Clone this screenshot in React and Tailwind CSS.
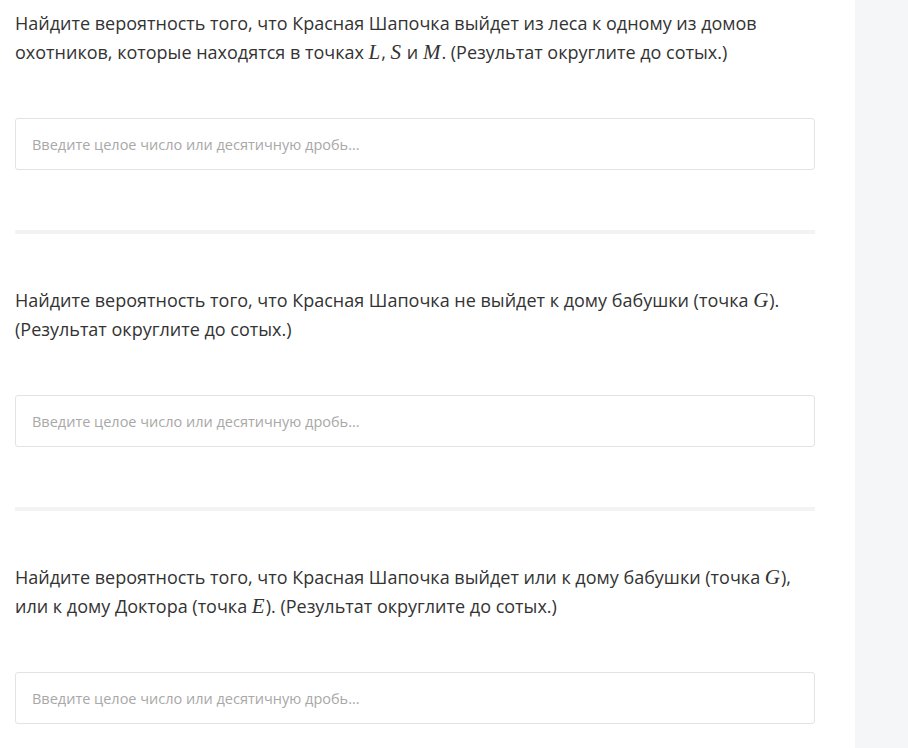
const PLACEHOLDER = "Введите целое число или десятичную дробь...";

function M({ children }) {
  return (
    <span className="inline-block pr-px font-['Liberation_Serif',serif] italic text-[21px] leading-[20px]">
      {children}
    </span>
  );
}

function AnswerInput() {
  return (
    <input
      type="text"
      placeholder={PLACEHOLDER}
      className="block h-[52px] w-full rounded-[3px] border border-[#e3e3e3] bg-white px-4 text-[14.5px] text-[#333] placeholder:text-[#a8a8a8] outline-none"
    />
  );
}

function Task({ children, last }) {
  return (
    <section className={last ? "" : "border-b-4 border-[#f3f3f3] pb-[60px] mb-[52px]"}>
      <p className="text-[18px] leading-[28.5px] text-[#333]">{children}</p>
      <div className="mt-[52px]">
        <AnswerInput />
      </div>
    </section>
  );
}

export default function App() {
  return (
    <div className="flex min-h-[748px] w-full bg-[#f5f6f8] font-['Open_Sans','Noto_Sans',sans-serif]">
      <main className="w-[855px] shrink-0 bg-white pl-[15px] pr-10 pt-[9px]">
        <Task>
          Найдите вероятность того, что Красная Шапочка выйдет из леса к одному из домов охотников, которые
          находятся в точках <M>L</M>, <M>S</M> и <M>M</M>. (Результат округлите до сотых.)
        </Task>
        <Task>
          Найдите вероятность того, что Красная Шапочка не выйдет к дому бабушки (точка <M>G</M>).
          (Результат округлите до сотых.)
        </Task>
        <Task last>
          Найдите вероятность того, что Красная Шапочка выйдет или к дому бабушки (точка <M>G</M>), или к
          дому Доктора (точка <M>E</M>). (Результат округлите до сотых.)
        </Task>
      </main>
      <aside className="flex-1" />
    </div>
  );
}
